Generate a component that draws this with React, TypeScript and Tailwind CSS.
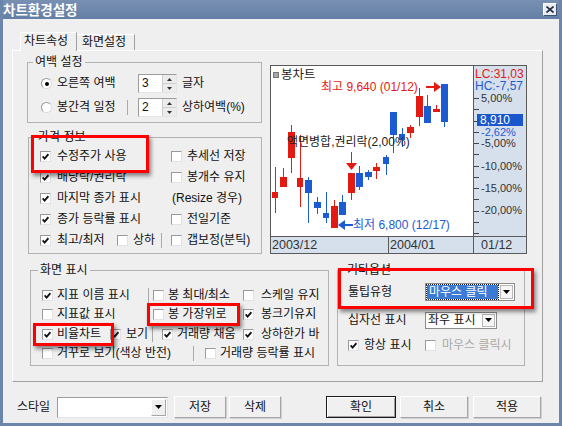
import React from "react"

type Candle = [number, number, number, number, number, number, "r" | "b"]
// x1, x2, body top, body bottom, wick top, wick bottom
const candles: Candle[] = [
  [272, 278, 192, 198, 167, 213, "r"],
  [280, 287, 177, 187, 168, 187, "r"],
  [288, 295, 132, 158, 125, 173, "r"],
  [297, 303, 178, 187, 135, 207, "r"],
  [305, 312, 180, 193, 177, 223, "b"],
  [314, 321, 202, 208, 197, 214, "b"],
  [323, 329, 213, 218, 192, 223, "b"],
  [331, 338, 206, 228, 200, 228, "r"],
  [339, 346, 202, 215, 195, 215, "b"],
  [348, 355, 173, 193, 173, 200, "r"],
  [356, 363, 173, 187, 166, 190, "b"],
  [365, 372, 172, 177, 170, 180, "b"],
  [373, 380, 167, 171, 163, 179, "r"],
  [383, 389, 157, 164, 155, 175, "b"],
  [390, 397, 112, 135, 112, 153, "b"],
  [399, 405, 134, 140, 128, 147, "b"],
  [407, 414, 127, 133, 125, 138, "r"],
  [416, 423, 96, 117, 88, 126, "r"],
  [424, 431, 106, 123, 95, 123, "b"],
  [433, 440, 109, 112, 105, 112, "r"],
  [441, 448, 84, 122, 84, 127, "b"],
]

const RED = "#e31a12"
const BLUE = "#1d5bd2"

const Box = ({ on, off }: { on?: boolean; off?: boolean }) => (
  <span className="w-[11px] h-[11px] shrink-0 flex items-center justify-center border border-t-[#9a9a9a] border-l-[#9a9a9a] border-r-[#e2e2e2] border-b-[#e2e2e2] bg-white">
    {on && (
      <svg width="7" height="7" viewBox="0 0 7 7">
        <path d="M0.6 3.4 L2.6 5.6 L6.4 1.2" stroke={off ? "#aaa" : "#111"} strokeWidth="1.8" fill="none" />
      </svg>
    )}
  </span>
)

const Check = ({ label, on, gap, off }: { label: string; on?: boolean; gap: string; off?: boolean }) => (
  <span className="flex items-center whitespace-nowrap">
    <Box on={on} off={off} />
    <span className={gap + (off ? " text-[#a9a9a9]" : "")}>{label}</span>
  </span>
)

const Sep = () => <span className="w-px h-[15px] shrink-0 bg-[#a9a9a9]" />

const Radio = ({ on }: { on?: boolean }) => (
  <span className="w-[11px] h-[11px] shrink-0 rounded-full flex items-center justify-center border border-t-[#9a9a9a] border-l-[#9a9a9a] border-r-[#dedede] border-b-[#dedede] bg-white">
    {on && <span className="w-[4px] h-[4px] rounded-full bg-black" />}
  </span>
)

const Down = () => (
  <svg width="7" height="4" viewBox="0 0 7 4">
    <path d="M0 0H7L3.5 4Z" fill="#000" />
  </svg>
)

const Spin = ({ v }: { v: string }) => (
  <div className="w-[39px] h-[19px] flex border border-t-[#9c9c9c] border-l-[#9c9c9c] border-r-[#e4e4e4] border-b-[#e4e4e4] bg-white">
    <span className="flex-1 pl-[3px] leading-[17px]">{v}</span>
    <div className="w-[14px] flex flex-col bg-[#ececec] border-l border-[#cfcfcf]">
      <span className="flex-1 flex items-center justify-center border-b border-[#cfcfcf]">
        <svg width="5" height="3" viewBox="0 0 5 3"><path d="M2.5 0L5 3H0Z" fill="#333" /></svg>
      </span>
      <span className="flex-1 flex items-center justify-center">
        <svg width="5" height="3" viewBox="0 0 5 3"><path d="M0 0H5L2.5 3Z" fill="#333" /></svg>
      </span>
    </div>
  </div>
)

const Btn = ({ children, w, def }: { children: string; w: string; def?: boolean }) => (
  <button
    className={
      w +
      " h-[22px] flex items-center justify-center bg-[#f0f0f0] border " +
      (def
        ? "border-[#1a1a1a] shadow-[inset_1px_1px_0_#fff,inset_-1px_-1px_0_#a0a0a0]"
        : "border-t-white border-l-white border-r-[#a6a6a6] border-b-[#a6a6a6] shadow-[1px_1px_0_#d0d0d0]")
    }
  >
    {children}
  </button>
)

const PlotChart = () => (
  <svg width="202" height="170" viewBox="271 66 202 170" shapeRendering="crispEdges" className="block">
    <rect x="271" y="66" width="202" height="170" fill="#fff" />
    {candles.map(([x1, x2, bt, bb, wt, wb, c], i) => {
      const col = c === "r" ? RED : BLUE
      const cx = Math.floor((x1 + x2) / 2)
      return (
        <g key={i}>
          <rect x={cx} y={wt} width="1" height={wb - wt} fill={col} />
          <rect x={x1} y={bt} width={x2 - x1} height={Math.max(bb - bt, 2)} fill={col} />
        </g>
      )
    })}
    <rect x="273" y="72" width="5" height="5" fill="#a8a8a8" stroke="#777" strokeWidth="1" />
    <text x="281" y="75" dominantBaseline="central" fontSize="12.5" fill="#222">봉차트</text>
    <text x="321" y="87" dominantBaseline="central" fontSize="12" fill={RED}>최고 9,640 (01/12)</text>
    <rect x="426" y="86" width="9" height="2" fill={RED} />
    <path d="M434 82L441 87L434 92Z" fill={RED} shapeRendering="auto" />
    <text x="287" y="142" dominantBaseline="central" fontSize="12" fill="#222">액면병합,권리락(2,00%)</text>
    <rect x="351" y="152" width="1" height="11" fill={RED} />
    <path d="M346 163H357L351.5 170Z" fill={RED} shapeRendering="auto" />
    <path d="M338 225L345 220V230Z" fill={BLUE} shapeRendering="auto" />
    <rect x="345" y="224" width="8" height="2" fill={BLUE} />
    <text x="353" y="225" dominantBaseline="central" fontSize="12" fill={BLUE}>최저 6,800 (12/17)</text>
  </svg>
)

const AxisChart = () => {
  const ticks = Array.from({ length: 13 }, (_, i) => Math.round(98 + i * 11.25))
  const labels: [number, string, string][] = [
    [98, "5,00%", "#333"],
    [132, "-2,62%", BLUE],
    [142.5, "-5,00%", "#333"],
    [166, "-10,00%", "#333"],
    [188, "-15,00%", "#333"],
    [210, "-20,00%", "#333"],
  ]
  return (
    <svg width="52" height="170" viewBox="474 66 52 170" className="block">
      {ticks.map((y) => (
        <rect key={y} x="474" y={y} width="5" height="1" fill="#444" shapeRendering="crispEdges" />
      ))}
      <text x="475" y="74" dominantBaseline="central" fontSize="12" fill={RED}>LC:31,03</text>
      <text x="475" y="86" dominantBaseline="central" fontSize="12" fill={BLUE}>HC:-7,57</text>
      {labels.map(([y, t, c]) => (
        <text key={t} x="481" y={y} dominantBaseline="central" fontSize="11" fill={c}>{t}</text>
      ))}
      <rect x="477" y="114" width="46" height="12" fill="#1a56cc" shapeRendering="crispEdges" />
      <text x="480" y="120" dominantBaseline="central" fontSize="12" fill="#fff">8,910</text>
    </svg>
  )
}

export default function App() {
  return (
    <div className="relative w-[562px] h-[426px] bg-[#6c86aa] flex flex-col px-[3px] pb-[3px] text-[12px] leading-[15px] text-[#111] font-['Liberation_Sans','Noto_Sans_CJK_KR',sans-serif]">
      {/* title bar */}
      <div className="h-[19px] flex items-center justify-between pr-[2px] bg-gradient-to-b from-[#7890b2] to-[#647fa5]">
        <span className="text-white font-bold text-[13.5px] leading-[19px] font-['Noto_Sans_CJK_KR',sans-serif]">차트환경설정</span>
        <span className="w-[14px] h-[13px] flex items-center justify-center bg-[#e9edf3] border border-t-white border-l-white border-r-[#3e5474] border-b-[#3e5474]">
          <svg width="8" height="7" viewBox="0 0 8 7">
            <path d="M0.5 0.5L7.5 6.5M7.5 0.5L0.5 6.5" stroke="#1d2a3c" strokeWidth="1.6" />
          </svg>
        </span>
      </div>

      <div className="flex-1 bg-[#efefef] px-[9px] pt-[13px] flex flex-col">
        {/* tabs */}
        <div className="h-[18px] flex items-end pl-[8px]">
          <div className="relative z-10 w-[57px] h-[19px] -mb-px bg-[#efefef] border-t border-l border-r border-t-white border-l-white border-r-[#a0a0a0] pl-[3px] leading-[17px]">
            차트속성
          </div>
          <div className="w-[58px] h-[16px] border-t border-r border-t-white border-r-[#a0a0a0] pl-[5px] leading-[15px]">
            화면설정
          </div>
        </div>

        {/* tab panel */}
        <div className="w-[531px] h-[332px] border border-t-white border-l-white border-r-[#a0a0a0] border-b-[#a0a0a0] flex flex-col">
          <div className="flex items-start">
            <div className="ml-[14px] w-[235px] flex flex-col">
              <fieldset className="mt-[4px] w-[235px] h-[68px] border border-[#b3b3b3]">
                <legend className="ml-[5px] px-[2px] leading-[14px]">여백 설정</legend>
                <div className="pt-[5px] pl-[13px] flex flex-col gap-[5px]">
                  <div className="h-[19px] flex items-center">
                    <Radio on />
                    <span className="ml-[5px] w-[71px] whitespace-nowrap">오른쪽 여백</span>
                    <span className="ml-[10px]"><Spin v="3" /></span>
                    <span className="ml-[5px]">글자</span>
                  </div>
                  <div className="h-[19px] flex items-center">
                    <Radio />
                    <span className="ml-[5px] w-[71px] flex items-center justify-between whitespace-nowrap">
                      봉간격 일정
                      <Sep />
                    </span>
                    <span className="ml-[10px]"><Spin v="2" /></span>
                    <span className="ml-[5px] whitespace-nowrap">상하여백(%)</span>
                  </div>
                </div>
              </fieldset>

              <fieldset className="mt-[7px] ml-[1px] w-[234px] h-[124px] border border-[#b3b3b3]">
                <legend className="ml-[7px] px-[2px] leading-[14px]">가격 정보</legend>
                <div className="pt-[2px] pl-[11px] flex flex-col">
                  <div className="h-[21px] flex items-center">
                    <span className="w-[131px]"><Check on label="수정주가 사용" gap="ml-[6px]" /></span>
                    <Check label="추세선 저장" gap="ml-[5px]" />
                  </div>
                  <div className="h-[21px] flex items-center">
                    <span className="w-[131px]"><Check on label="배당락/권리락" gap="ml-[6px]" /></span>
                    <Check label="봉개수 유지" gap="ml-[5px]" />
                  </div>
                  <div className="h-[21px] flex items-center">
                    <span className="w-[131px]"><Check on label="마지막 종가 표시" gap="ml-[6px]" /></span>
                    <span className="ml-[1px] whitespace-nowrap">(Resize 경우)</span>
                  </div>
                  <div className="h-[21px] flex items-center">
                    <span className="w-[131px]"><Check on label="종가 등락률 표시" gap="ml-[6px]" /></span>
                    <Check label="전일기준" gap="ml-[5px]" />
                  </div>
                  <div className="h-[21px] flex items-center">
                    <span className="w-[121px] flex items-center">
                      <Box on />
                      <span className="ml-[6px] w-[56px] whitespace-nowrap">최고/최저</span>
                      <span className="ml-[4px]"><Check label="상하" gap="ml-[5px]" /></span>
                    </span>
                    <Sep />
                    <span className="ml-[9px]"><Check label="갭보정(분틱)" gap="ml-[5px]" /></span>
                  </div>
                </div>
              </fieldset>
            </div>

            {/* chart */}
            <div className="ml-[8px] mt-[14px] w-[257px] h-[189px] border border-[#5a5a5a] flex">
              <div className="w-[202px] flex flex-col">
                <PlotChart />
                <div className="h-[17px] border-t border-[#5a5a5a] bg-[#d6e0ed] flex text-[#333] text-[12.5px] leading-[16px]">
                  <span className="w-[118px] pl-[1px] border-r border-[#5a5a5a]">2003/12</span>
                  <span className="pl-[1px]">2004/01</span>
                </div>
              </div>
              <div className="w-[53px] border-l border-[#5a5a5a] bg-[#d6e0ed] flex flex-col">
                <AxisChart />
                <div className="h-[17px] border-t border-[#5a5a5a] pl-[7px] text-[#333] text-[12.5px] leading-[16px]">01/12</div>
              </div>
            </div>
          </div>

          <div className="mt-[9px] flex items-start">
            <fieldset className="ml-[17px] w-[299px] h-[103px] border border-[#b3b3b3]">
              <legend className="ml-[7px] px-[2px] leading-[14px]">화면 표시</legend>
              <div className="pt-[8.5px] pl-[11px] flex flex-col">
                <div className="h-[19.5px] flex items-center">
                  <span className="w-[106px]"><Check on label="지표 이름 표시" gap="ml-[4px]" /></span>
                  <Sep />
                  <span className="w-[94px] pl-[4px]"><Check label="봉 최대/최소" gap="ml-[4px]" /></span>
                  <Check label="스케일 유지" gap="ml-[7px]" />
                </div>
                <div className="h-[19.5px] flex items-center">
                  <span className="w-[106px]"><Check label="지표값 표시" gap="ml-[4px]" /></span>
                  <span className="w-[95px] pl-[5px]"><Check label="봉 가장위로" gap="ml-[4px]" /></span>
                  <Check on label="봉크기유지" gap="ml-[7px]" />
                </div>
                <div className="h-[19.5px] flex items-center">
                  <span className="w-[68px]"><Check on label="비율차트" gap="ml-[4px]" /></span>
                  <span className="w-[42px]"><Check on label="보기" gap="ml-[5px]" /></span>
                  <Sep />
                  <span className="w-[90px] pl-[9px]"><Check on label="거래량 채움" gap="ml-[4px]" /></span>
                  <Check on label="상하한가 바" gap="ml-[7px]" />
                </div>
                <div className="h-[19.5px] flex items-center">
                  <span className="w-[151px]"><Check label="거꾸로 보기(색상 반전)" gap="ml-[4px]" /></span>
                  <Sep />
                  <span className="pl-[11px]"><Check label="거래량 등락률 표시" gap="ml-[4px]" /></span>
                </div>
              </div>
            </fieldset>

            <fieldset className="ml-[8px] w-[188px] h-[103px] border border-[#b3b3b3]">
              <legend className="ml-[7px] px-[2px] leading-[14px]">기타옵션</legend>
              <div className="pt-[6px] pl-[10px] flex flex-col">
                <div className="h-[18px] flex items-center">
                  <span className="w-[77px]">툴팁유형</span>
                  <div className="w-[90px] h-[18px] flex border border-[#8c8c8c] bg-white p-[1px]">
                    <span className="flex-1 bg-[#3b7bd6] text-white leading-[14px] pl-[2px] outline outline-1 outline-dotted outline-[#222] whitespace-nowrap">마우스 클릭</span>
                    <span className="w-[13px] ml-[2px] flex items-center justify-center border border-[#b8b8b8] bg-[#f6f6f6]"><Down /></span>
                  </div>
                </div>
                <div className="mt-[10px] h-[18px] flex items-center">
                  <span className="w-[77px] whitespace-nowrap">십자선 표시</span>
                  <div className="w-[72px] h-[17px] flex border border-[#8c8c8c] bg-white p-[1px]">
                    <span className="flex-1 leading-[13px] pl-[1px] whitespace-nowrap">좌우 표시</span>
                    <span className="w-[13px] flex items-center justify-center border border-[#b8b8b8] bg-[#f6f6f6]"><Down /></span>
                  </div>
                </div>
                <div className="mt-[7px] h-[18px] flex items-center">
                  <span className="w-[77px]"><Check on label="항상 표시" gap="ml-[5px]" /></span>
                  <Check off label="마우스 클릭시" gap="ml-[6px]" />
                </div>
              </div>
            </fieldset>
          </div>
        </div>

        {/* bottom buttons */}
        <div className="mt-[14px] ml-[5px] flex items-center">
          <span className="w-[40px]">스타일</span>
          <div className="w-[111px] h-[21px] flex border border-t-[#9c9c9c] border-l-[#9c9c9c] border-r-[#e4e4e4] border-b-[#e4e4e4] bg-white p-[1px]">
            <span className="flex-1" />
            <span className="w-[15px] flex items-center justify-center bg-[#f0f0f0] border border-t-white border-l-white border-r-[#a6a6a6] border-b-[#a6a6a6]"><Down /></span>
          </div>
          <span className="ml-[6px]"><Btn w="w-[52px]">저장</Btn></span>
          <span className="ml-[3px]"><Btn w="w-[52px]">삭제</Btn></span>
          <span className="ml-[45px]"><Btn w="w-[70px]" def>확인</Btn></span>
          <span className="ml-[4px]"><Btn w="w-[68px]">취소</Btn></span>
          <span className="ml-[5px]"><Btn w="w-[68px]">적용</Btn></span>
        </div>
      </div>

      {/* red highlight annotations */}
      <div className="absolute left-[31px] top-[135px] w-[118px] h-[38px] border-[3px] border-[#ff0000] shadow-[2px_3px_4px_rgba(0,0,0,0.45)]" />
      <div className="absolute left-[147px] top-[303px] w-[93px] h-[23px] border-[3px] border-[#ff0000] shadow-[2px_3px_4px_rgba(0,0,0,0.45)]" />
      <div className="absolute left-[33px] top-[323px] w-[81px] h-[23px] border-[3px] border-[#ff0000] shadow-[2px_3px_4px_rgba(0,0,0,0.45)]" />
      <div className="absolute left-[338px] top-[268px] w-[196px] h-[41px] border-[3px] border-[#ff0000] shadow-[2px_3px_4px_rgba(0,0,0,0.45)]" />
    </div>
  )
}
